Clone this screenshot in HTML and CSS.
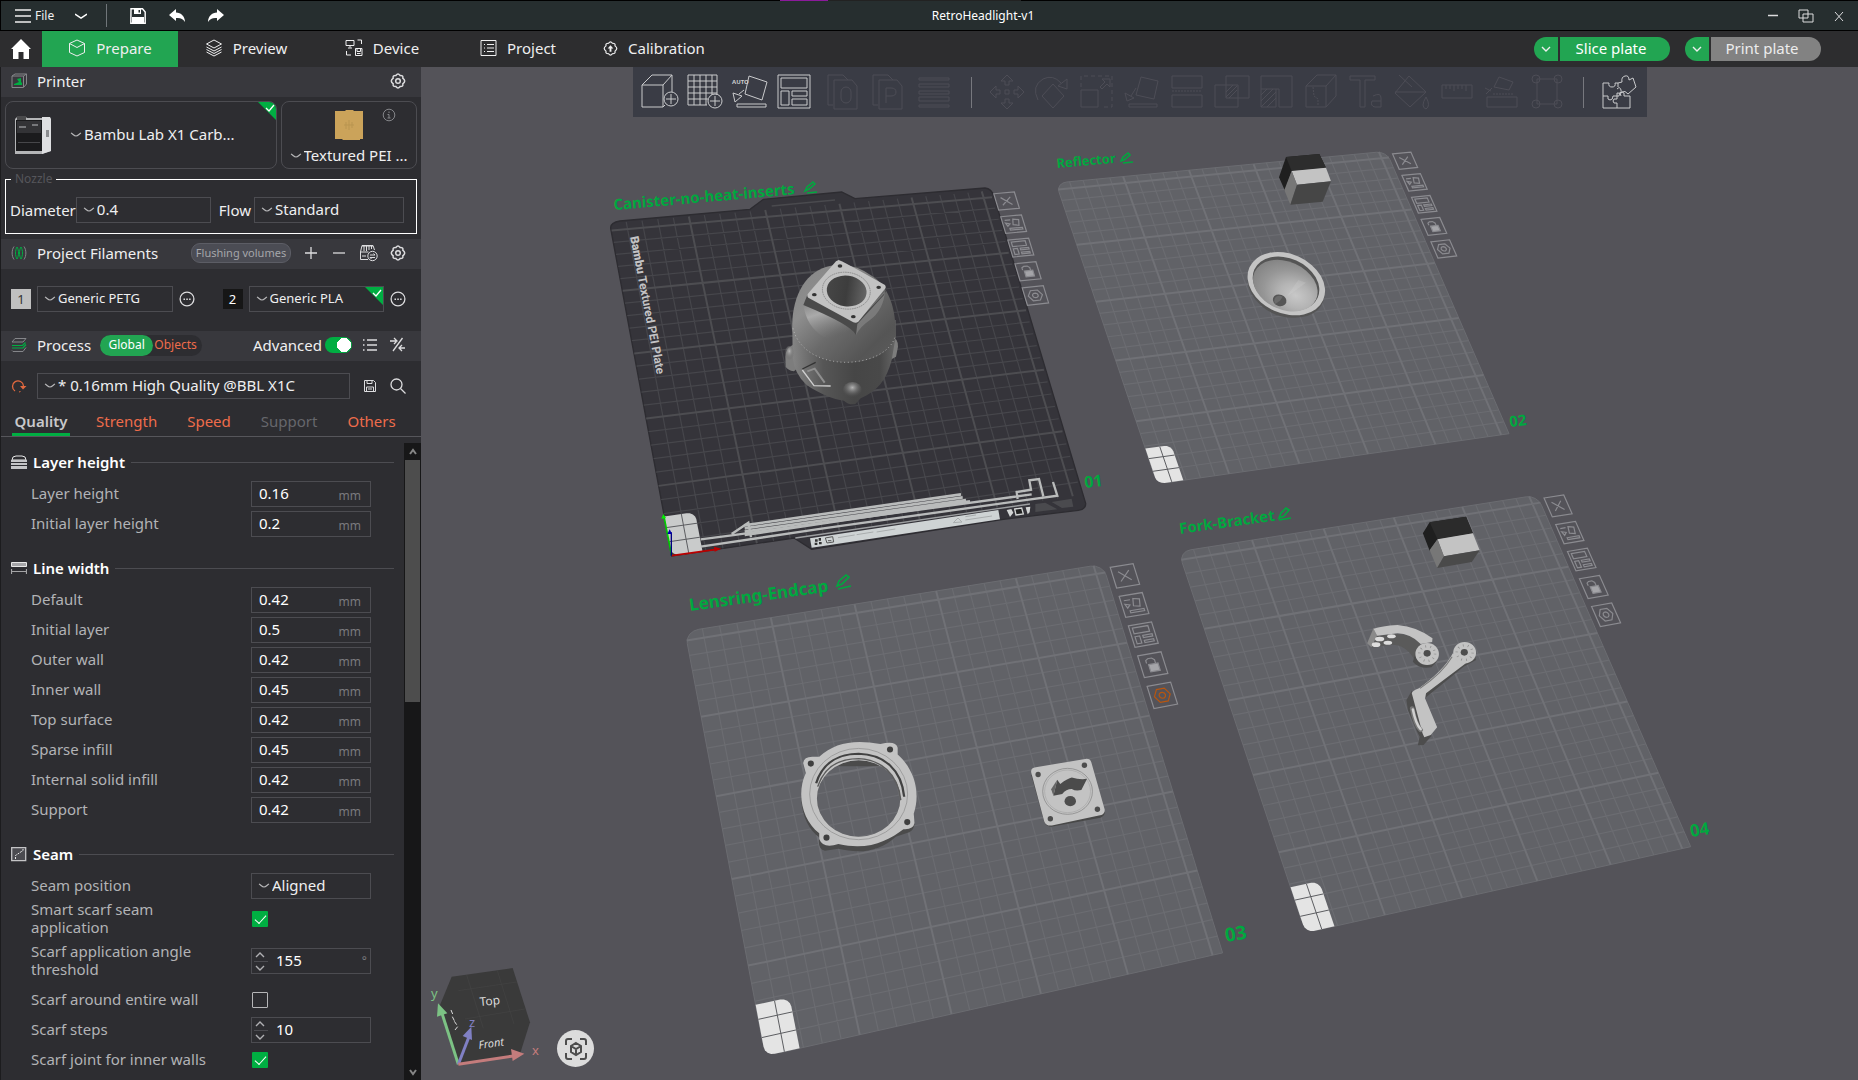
FILE: index.html
```html
<!DOCTYPE html>
<html lang="en">
<head>
<meta charset="utf-8">
<title>RetroHeadlight-v1</title>
<link rel="stylesheet" href="styles.css">
</head>
<body>
<svg class="sprite" aria-hidden="true">
  <symbol id="chev" viewBox="0 0 12 12"><path d="M1 4c2 1 3 3 5 3s3-2 5-3" fill="none" stroke="currentColor" stroke-width="1.2"/></symbol>
  <symbol id="down" viewBox="0 0 12 12"><path d="M2 4l4 4 4-4" fill="none" stroke="currentColor" stroke-width="1.4"/></symbol>
  <symbol id="up" viewBox="0 0 12 12"><path d="M2 8l4-4 4 4" fill="none" stroke="currentColor" stroke-width="1.4"/></symbol>
  <symbol id="gear" viewBox="0 0 16 16"><g fill="none" stroke="currentColor" stroke-width="1.5"><path d="M6 2.4Q8-.6 10 2.4Q13.600 2.200 12.800 5.200Q16.600 8 12.800 10.800Q13.600 13.800 10 13.600Q8 16.600 6 13.600Q2.400 13.800 3.200 10.800Q-.6 8 3.200 5.200Q2.400 2.200 6 2.400Z"/><circle cx="8" cy="8" r="2.300"/></g></symbol>
  <symbol id="dots" viewBox="0 0 16 16"><circle cx="8" cy="8" r="6.900" fill="none" stroke="currentColor" stroke-width="1.300"/><path d="M4.500 7.500h1.500v1.500h-1.500zM7.300 7.500h1.500v1.500h-1.500zM10.100 7.500h1.500v1.500h-1.500z" fill="currentColor"/></symbol>
  <symbol id="tick" viewBox="0 0 18 18"><path d="M0 0h18v18z" fill="#00ae42"/><path d="M8 6l3 3 5-6" fill="none" stroke="#fff" stroke-width="1.300"/></symbol>
</svg>

<header class="titlebar">
  <div class="title-left">
    <button class="file-menu" type="button">
      <svg width="16" height="14" viewBox="0 0 16 14"><path d="M0 1h16M0 7h16M0 13h16" stroke="currentColor" stroke-width="1.500"/></svg>
      File
    </button>
    <button class="bare" type="button" aria-label="More"><svg width="12" height="12" viewBox="0 0 12 12"><path d="M0 4l6 4 6-4" fill="none" stroke="currentColor" stroke-width="1.500"/></svg></button>
    <span class="title-rule"></span>
    <button class="bare" type="button" aria-label="Save"><svg width="16" height="16" viewBox="0 0 16 16"><path d="M1 .8h11.500L15.200 4v11.200H.8z" fill="none" stroke="currentColor" stroke-width="1.400"/><path d="M4 1h7v5H4zM2 9h12v6H2z" fill="currentColor"/><path d="M8.500 2h1.500v2.500H8.500z" fill="#262e2f"/></svg></button>
    <button class="bare" type="button" aria-label="Undo"><svg width="16" height="14" viewBox="0 0 16 14"><path d="M7 0v3.500c5 0 9 4 9 9.500-2-3.500-5-4.500-9-4v3L0 6z" fill="currentColor"/></svg></button>
    <button class="bare" type="button" aria-label="Redo"><svg width="16" height="14" viewBox="0 0 16 14"><path d="M9 0v3.500C4 3.500 0 7.500 0 13c2-3.500 5-4.500 9-4v3l7-6z" fill="currentColor"/></svg></button>
  </div>
  <h1 class="title">RetroHeadlight-v1</h1>
  <div class="title-right">
    <button class="bare" type="button" aria-label="Minimize"><svg width="10" height="12" viewBox="0 0 10 12"><path d="M0 5.500h10" stroke="currentColor" stroke-width="1.500"/></svg></button>
    <button class="bare" type="button" aria-label="Restore"><svg width="16" height="14" viewBox="0 0 16 14"><path d="M1 1h9v8H1zM5 5h10v8H5z" fill="none" stroke="currentColor"/></svg></button>
    <button class="bare" type="button" aria-label="Close"><svg width="10" height="12" viewBox="0 0 10 12"><path d="M1 2l8 9M9 2l-8 9" stroke="currentColor"/></svg></button>
  </div>
</header>

<nav class="nav">
  <a class="home" href="#home" aria-label="Home"><svg width="20" height="20" viewBox="0 0 20 20"><path d="M10 0l10 10h-2v10h-5.500v-7h-5v7H2V10H0z" fill="#fff"/></svg></a>
  <a class="tab tab-on" href="#prepare"><svg width="18" height="18" viewBox="0 0 18 18" class="line"><path d="M9 1l7.500 3.500v9L9 17l-7.500-3.500v-9zM1.500 4.500L9 8.500l7.500-4"/></svg>Prepare</a>
  <a class="tab" href="#preview"><svg width="18" height="18" viewBox="0 0 18 18" class="line"><path d="M9 1l7.500 4L9 9 1.500 5zM1.500 8L9 12l7.500-4M1.500 10.500l7.500 4 7.500-4M1.500 13L9 17l7.500-4"/></svg>Preview</a>
  <a class="tab" href="#device"><svg width="18" height="18" viewBox="0 0 18 18" class="line"><path d="M1 1.500h8v5H1zM5 6.500v2M3 9h4M12.500 1h4v4M1.500 12v4h4.500M10.500 9.500h6.500v7h-6.500zM12 9.500v3h3.500v-3M12 14.500h3.500"/></svg>Device</a>
  <a class="tab" href="#project"><svg width="17" height="18" viewBox="0 0 17 18" class="line"><path d="M1 1.500h15v15H1zM4 5.500h1M7 5.500h7M4 9h1M7 9h7M4 12.500h1M7 12.500h7"/></svg>Project</a>
  <a class="tab" href="#calibration"><svg width="15" height="15" viewBox="0 0 16 16"><path d="M6 2.400Q8-.6 10 2.400Q13.600 2.200 12.800 5.200Q16.600 8 12.800 10.800Q13.600 13.800 10 13.600Q8 16.600 6 13.600Q2.400 13.800 3.200 10.800Q-.6 8 3.200 5.200Q2.400 2.200 6 2.400Z" fill="none" stroke="currentColor" stroke-width="1.300"/><path d="M8 4.500l3 3.500H9v3.500H7V8H5z" fill="currentColor"/></svg>Calibration</a>
  <div class="actions">
    <div class="split"><button class="split-caret" type="button" aria-label="Slice options"><svg width="12" height="12"><use href="#down"/></svg></button><button class="split-main" type="button">Slice plate</button></div>
    <div class="split"><button class="split-caret" type="button" aria-label="Print options"><svg width="12" height="12"><use href="#down"/></svg></button><button class="split-main split-off" type="button">Print plate</button></div>
  </div>
</nav>

<main class="work">
<aside class="side">
  <div class="bar">
    <svg width="16" height="16" viewBox="0 0 16 16"><path d="M1 3l3-2h11.500v10l-3 3.500H1zM1 3h11.500v11M12.500 3l3-2" fill="none" stroke="#85868a"/><path d="M6 6l4-1v4l1 1v2H3v-1l5-2z" fill="#00ae42"/></svg>
    <h2>Printer</h2>
    <button class="bare push" type="button" aria-label="Printer settings"><svg width="16" height="16"><use href="#gear"/></svg></button>
  </div>
  <div class="cards">
    <div class="card card-printer">
      <svg width="38" height="38" viewBox="0 0 38 38"><path d="M1 3l2-2h9l1 1h23l1 2v31l-9 3H1z" fill="#b4b5b7"/><path d="M28 1h8l1 2v32l-9 3z" fill="#dedfe1"/><path d="M3 0h9v5H3z" fill="#4a4a4c"/><path d="M2 4h26v31H2z" fill="#1b1b1d"/><path d="M3 5h24v12H3z" fill="#333336"/><path d="M5 10h7v2H5zM18 8h6v2h-6z" fill="#77787b"/><path d="M4 26h22v1H4z" fill="#47474a"/><path d="M32 14h3v7h-3z" fill="#8b8c8f"/></svg>
      <div class="pick"><svg width="12" height="12"><use href="#chev"/></svg><select aria-label="Printer"><option>Bambu Lab X1 Carb...</option></select></div>
      <svg class="corner" width="18" height="18"><use href="#tick"/></svg>
    </div>
    <div class="card card-plate">
      <svg class="sheet" width="28" height="30" viewBox="0 0 28 30"><path d="M0 1h10l1-1h7l1 1h9v28h-3v1H8l-1-1H0z" fill="#cba35a"/><path d="M11 12v7M14 10v10M17 12v6M9 15h10" stroke="#b99550"/></svg>
      <svg class="info" width="14" height="14" viewBox="0 0 14 14"><circle cx="7" cy="7" r="5.800" fill="none" stroke="#85868a"/><path d="M7 3.500v1.500M5.500 6.500H7v3.500M5.500 10h3" stroke="#85868a" fill="none"/></svg>
      <div class="pick"><svg width="12" height="12"><use href="#chev"/></svg><select aria-label="Plate type"><option>Textured PEI ...</option></select></div>
    </div>
  </div>
  <fieldset class="nozzle">
    <legend>Nozzle</legend>
    <label for="dia">Diameter</label>
    <div class="box pick dia"><svg width="12" height="12"><use href="#chev"/></svg><select id="dia"><option>0.4</option></select></div>
    <label for="flow" class="flow-label">Flow</label>
    <div class="box pick grow"><svg width="12" height="12"><use href="#chev"/></svg><select id="flow"><option>Standard</option></select></div>
  </fieldset>

  <div class="bar">
    <svg width="16" height="16" viewBox="0 0 16 16" fill="none"><path d="M3 1.500C.5 5 .5 11 3 14.500M13 1.500c2.500 3.500 2.500 9.500 0 13" stroke="#85868a"/><path d="M6 2C4 5 4 11 6 14M6 2c2 3 2 9 0 12M10 2c-2 3-2 9 0 12M10 2c2 3 2 9 0 12" stroke="#00ae42"/></svg>
    <h2>Project Filaments</h2>
    <button class="flush push" type="button">Flushing volumes</button>
    <button class="bare add" type="button" aria-label="Add filament"><svg width="12" height="12" viewBox="0 0 12 12"><path d="M6 0v12M0 6h12" stroke="currentColor" stroke-width="1.300"/></svg></button>
    <button class="bare less" type="button" aria-label="Remove filament"><svg width="12" height="12" viewBox="0 0 12 12"><path d="M0 6h12" stroke="currentColor" stroke-width="1.300"/></svg></button>
    <button class="bare sync" type="button" aria-label="Sync AMS"><svg width="19" height="18" viewBox="0 0 19 18" fill="none" stroke="currentColor"><path d="M9 15.500H1.500V8L3 1.500h11L15.500 6M1.500 8h8M3 2h11M5 2v5M7.500 2v5M10 2v4M12.500 2v3M3 12h4"/><circle cx="13.500" cy="12" r="4.700"/><path d="M11 11h5l-1.500-1.500M16 13.500h-5l1.500 1.500"/></svg></button>
    <button class="bare" type="button" aria-label="Filament settings"><svg width="16" height="16"><use href="#gear"/></svg></button>
  </div>
  <div class="filaments">
    <div class="filament"><span class="chip chip-gray">1</span><div class="box pick grow"><svg width="12" height="12"><use href="#chev"/></svg><select class="small" aria-label="Filament 1"><option>Generic PETG</option></select></div><button class="bare" type="button" aria-label="Edit filament 1"><svg width="16" height="16"><use href="#dots"/></svg></button></div>
    <div class="filament"><span class="chip chip-black">2</span><div class="box pick grow"><svg width="12" height="12"><use href="#chev"/></svg><select class="small" aria-label="Filament 2"><option>Generic PLA</option></select><svg class="corner" width="18" height="18"><use href="#tick"/></svg></div><button class="bare" type="button" aria-label="Edit filament 2"><svg width="16" height="16"><use href="#dots"/></svg></button></div>
  </div>

  <div class="bar">
    <svg width="16" height="16" viewBox="0 0 16 16" fill="none"><path d="M1 5l3-3.500h11L12 5zM1 13.500l1 1h10l3-4" stroke="#85868a"/><path d="M1 8.500h10.500l3-3M1 11h11l3-3.500" stroke="#00ae42" stroke-width="1.200"/></svg>
    <h2>Process</h2>
    <div class="scope"><button class="scope-on" type="button">Global</button><button class="scope-off" type="button">Objects</button></div>
    <label class="push adv" for="adv">Advanced</label>
    <input class="toggle" id="adv" type="checkbox" checked>
    <button class="bare list" type="button" aria-label="List"><svg width="14" height="12" viewBox="0 0 14 12"><path d="M0 1h1.500M4 1h10M0 6h1.500M4 6h10M0 11h1.500M4 11h10" stroke="currentColor" stroke-width="1.400"/></svg></button>
    <button class="bare" type="button" aria-label="Compare"><svg width="16" height="16" viewBox="0 0 16 16" fill="none" stroke="currentColor" stroke-width="1.300"><path d="M12.500 1L3 14M0 4h6M4 1l3 3-3 3M15 11H9M12 8l-3 3 3 3"/></svg></button>
  </div>
  <div class="preset">
    <button class="bare reset" type="button" aria-label="Reset"><svg width="16" height="16" viewBox="0 0 16 16" fill="none"><path d="M4 13A5.500 5.500 0 1 1 12.500 8" stroke="#e2693f" stroke-width="1.300"/><path d="M9 8h6.500l-3.500 3.500z" fill="#e2693f"/><path d="M8 14l1.500-.5" stroke="#e2693f"/></svg></button>
    <div class="box pick grow"><svg width="12" height="12"><use href="#chev"/></svg><select aria-label="Preset"><option>* 0.16mm High Quality @BBL X1C</option></select></div>
    <button class="bare" type="button" aria-label="Save preset"><svg width="16" height="16" viewBox="0 0 16 16" fill="none" stroke="currentColor"><path d="M2.500 2.500h9L13.500 4.500v9h-11zM5 2.500v3h5v-3M4.500 13.500V9h7v4.500M6 11h4"/></svg></button>
    <button class="bare" type="button" aria-label="Search"><svg width="16" height="16" viewBox="0 0 16 16" fill="none" stroke="currentColor" stroke-width="1.300"><circle cx="6.500" cy="6.500" r="5.500"/><path d="M10.500 10.500L15.500 15.500"/></svg></button>
  </div>
  <div class="subtabs">
    <a class="sub sub-on" href="#quality">Quality</a><a class="sub" href="#strength">Strength</a><a class="sub" href="#speed">Speed</a><a class="sub sub-off" href="#support">Support</a><a class="sub" href="#others">Others</a>
  </div>

  <div class="settings">
    <div class="fields">
      <section>
        <h3><svg width="16" height="16" viewBox="0 0 16 16"><path d="M1 6q0-4 4-4h6q4 0 4 4z" fill="none" stroke="#e8e8e8"/><path d="M0 6h16v2H0zM0 9h16v2H0zM0 12h16v3H0z" fill="#c4c4c6"/></svg>Layer height</h3>
        <div class="row"><label for="f1">Layer height</label><div class="box num"><input id="f1" value="0.16"><span>mm</span></div></div>
        <div class="row"><label for="f2">Initial layer height</label><div class="box num"><input id="f2" value="0.2"><span>mm</span></div></div>
      </section>
      <section>
        <h3><svg width="16" height="16" viewBox="0 0 16 16"><path d="M.5 2.500h15v4H.5z" fill="#a5a5a8" stroke="#e8e8e8"/><path d="M.5 9v5M15.500 9v5M1 11.500h14" stroke="#a4a4a6" stroke-width="1.200"/></svg>Line width</h3>
        <div class="row"><label for="w1">Default</label><div class="box num"><input id="w1" value="0.42"><span>mm</span></div></div>
        <div class="row"><label for="w2">Initial layer</label><div class="box num"><input id="w2" value="0.5"><span>mm</span></div></div>
        <div class="row"><label for="w3">Outer wall</label><div class="box num"><input id="w3" value="0.42"><span>mm</span></div></div>
        <div class="row"><label for="w4">Inner wall</label><div class="box num"><input id="w4" value="0.45"><span>mm</span></div></div>
        <div class="row"><label for="w5">Top surface</label><div class="box num"><input id="w5" value="0.42"><span>mm</span></div></div>
        <div class="row"><label for="w6">Sparse infill</label><div class="box num"><input id="w6" value="0.45"><span>mm</span></div></div>
        <div class="row"><label for="w7">Internal solid infill</label><div class="box num"><input id="w7" value="0.42"><span>mm</span></div></div>
        <div class="row"><label for="w8">Support</label><div class="box num"><input id="w8" value="0.42"><span>mm</span></div></div>
      </section>
      <section>
        <h3><svg width="16" height="16" viewBox="0 0 16 16"><path d="M.7 1.700h14v13h-14z" fill="#4b4b50" stroke="#c4c4c6" stroke-width="1.300"/><path d="M4.500 13V9.500L12 4.500V2" fill="none" stroke="#e8e8e8" stroke-dasharray="2 1"/></svg>Seam</h3>
        <div class="row"><label for="s1">Seam position</label><div class="box pick field"><svg width="12" height="12"><use href="#chev"/></svg><select id="s1"><option>Aligned</option></select></div></div>
        <div class="row row-two"><label for="s2">Smart scarf seam application</label><input class="check" id="s2" type="checkbox" checked></div>
        <div class="row row-tall"><label for="s3">Scarf application angle threshold</label><div class="box num spin"><div class="steps"><button type="button" aria-label="Increase angle"><svg width="12" height="12"><use href="#up"/></svg></button><button type="button" aria-label="Decrease angle"><svg width="12" height="12"><use href="#down"/></svg></button></div><input id="s3" value="155"><span class="deg">°</span></div></div>
        <div class="row"><label for="s4">Scarf around entire wall</label><input class="check" id="s4" type="checkbox"></div>
        <div class="row"><label for="s5">Scarf steps</label><div class="box num spin"><div class="steps"><button type="button" aria-label="Increase steps"><svg width="12" height="12"><use href="#up"/></svg></button><button type="button" aria-label="Decrease steps"><svg width="12" height="12"><use href="#down"/></svg></button></div><input id="s5" value="10"></div></div>
        <div class="row"><label for="s6">Scarf joint for inner walls</label><input class="check" id="s6" type="checkbox" checked></div>
      </section>
    </div>
    <div class="scroll"><svg width="12" height="17" viewBox="0 0 12 17"><path d="M3 11l3-4 3 4" fill="none" stroke="#858585" stroke-width="2"/></svg><span class="thumb"></span><svg width="12" height="17" viewBox="0 0 12 17"><path d="M3 7l3 4 3-4" fill="none" stroke="#858585" stroke-width="2"/></svg></div>
  </div>
</aside>

<section class="view" aria-label="Build plates">
  <svg class="scene" id="scene" viewBox="421 67 1437 1013" preserveAspectRatio="xMidYMid slice">
    <defs>
      <linearGradient id="dome" x1="0" y1="0" x2="1" y2="1"><stop offset="0" stop-color="#858585"/><stop offset=".3" stop-color="#8e8e8e"/><stop offset=".55" stop-color="#6a6a6a"/><stop offset=".8" stop-color="#555"/><stop offset="1" stop-color="#5c5c5c"/></linearGradient>
      <linearGradient id="wall" x1="0" y1="0" x2="1" y2="0"><stop offset="0" stop-color="#858585"/><stop offset=".3" stop-color="#565656"/><stop offset=".6" stop-color="#464646"/><stop offset=".85" stop-color="#494949"/><stop offset="1" stop-color="#666"/></linearGradient>
      <linearGradient id="bore" x1="0" y1="0" x2="1" y2="0"><stop offset="0" stop-color="#464646"/><stop offset=".5" stop-color="#3d3d3d"/><stop offset="1" stop-color="#666"/></linearGradient>
      <radialGradient id="bowl" cx=".7" cy=".6" r=".7"><stop offset="0" stop-color="#c8c8c8"/><stop offset=".35" stop-color="#b4b4b4"/><stop offset=".7" stop-color="#979797"/><stop offset="1" stop-color="#858585"/></radialGradient>
      <radialGradient id="knob" cx=".5" cy=".35" r=".6"><stop offset="0" stop-color="#b5b5b5"/><stop offset="1" stop-color="#5a5a5a" stop-opacity="0"/></radialGradient>
      <linearGradient id="facet" x1="0" y1="0" x2=".5" y2="1"><stop offset="0" stop-color="#888"/><stop offset=".35" stop-color="#aaa"/><stop offset="1" stop-color="#777" stop-opacity="0"/></linearGradient>
    </defs>
    <g id="sheet1" transform="translate(590 170) scale(.333333)">
      <path d="M62 175Q60 158 90 153L480 118 520 88 755 66 795 86 1185 54Q1205 55 1212 80L1487 1000Q1488 1018 1465 1021L1240 1048 665 1138 612 1104 245 1158Z" fill="#35343a" stroke="#2d2c31" stroke-width="4"/>
      <path d="M545 108l190-18" stroke="#4a4a4e" stroke-width="5"/>
    </g>
    <g id="plates"></g>
    <g transform="translate(590 170) scale(.333333)">
      <g fill="none" stroke="#b9bbbb" stroke-width="7">
        <path d="M462 1066L1113 973M464 1075L1118 982M464 1085L1128 990M464 1095L1140 994" stroke-width="8"/>
        <path d="M332 1108L425 1096 1325 973M425 1092l50-34 8 44M332 1130L700 1075 1402 977 1389 936M1283 987l-3-21 43-7-5-28 29-4 13 52"/>
      </g>
      <path d="M660 1105L1225 1020 1230 1048 665 1133Z" fill="#ced3d4"/>
      <path d="M616 1104l704-102" stroke="#9c9ea0" stroke-width="4"/>
      <path d="M675 1108h8v7h-8zM686 1104h7v8h-7zM674 1118h8v7h-8zM687 1116h8v7h-8z" fill="#333"/>
      <path d="M706 1104l22-4 3 16-20 3zM714 1112h10" fill="none" stroke="#555" stroke-width="3"/>
      <path d="M744 1103l50-8M800 1094l50-8M860 1086l56-9M1090 1058l14-14 12 12zM1126 1040l32-5M1126 1050l80-12" fill="none" stroke="#a9adae" stroke-width="3"/>
      <path d="M1250 1020l14-3 6 11-10 13zM1307 1012l14-2-2 17-6 6z" fill="#d2d4d4"/><path d="M1274 1017l21-3 5 18-22 3z" fill="#222" stroke="#d2d4d4" stroke-width="4"/>
      <path d="M1336 1002l30-4 36 20-66 8zM1385 996l60-10 5 24-34 4z" fill="#4a4a4e"/>
      <path d="M245 1157L222 1040" stroke="#0c0" stroke-width="5"/><path d="M214 1046l14-2-8-12z" fill="#0e0"/>
      <path d="M245 1157l135-19" stroke="#b00" stroke-width="5"/><path d="M372 1130l22 6-20 9z" fill="#b00"/>
      <path d="M244 1157v-70" stroke="#000080" stroke-width="4"/><path d="M232 1092l7-14 7 14z" fill="#00a"/>
      <!-- canister -->
      <path d="M607 525Q585 540 586 560L587 590Q592 600 612 604L660 560ZM905 500Q925 505 924 530L918 560 900 570Z" fill="#7d7d7d"/>
      <path d="M607 470L608 560Q612 610 650 645C690 672 730 688 762 692Q776 706 796 702L812 685C860 665 890 630 905 570L917 500V450Z" fill="url(#wall)"/>
      <path d="M607 480C603 390 640 310 710 290Q780 270 850 320C905 360 918 430 917 500C900 550 840 577 770 578C690 575 620 540 607 480Z" fill="url(#dome)"/>
      <path d="M640 405Q720 390 798 460Q750 520 700 500Q650 470 640 405Z" fill="url(#facet)"/>
      <path d="M798 495Q790 470 800 455L885 365Q880 420 840 450Q810 470 798 495Z" fill="#8b8b8b" opacity=".6"/>
      <path d="M640 405L652 375 798 458 888 365 890 352 882 375 802 462 798 495Q785 465 640 405Z" fill="#4a4a4a"/>
      <path d="M609 475C625 540 690 577 770 577C850 575 905 540 915 500" fill="none" stroke="#cfcfcf" stroke-width="2" stroke-dasharray="3 8"/>
      <path d="M746 270Q752 270 885 345Q890 352 884 358L805 455Q798 460 790 457L655 383Q649 378 655 370L738 274Z" fill="#c2c2c2"/>
      <ellipse cx="769" cy="362" rx="72" ry="55" fill="none" stroke="#777" stroke-width="2" stroke-dasharray="5 2" transform="rotate(8 769 362)"/>
      <ellipse cx="770" cy="363" rx="60" ry="46" fill="url(#bore)" transform="rotate(8 770 363)"/>
      <g fill="#333"><ellipse cx="750" cy="288" rx="7" ry="5"/><ellipse cx="866" cy="352" rx="7" ry="5"/><ellipse cx="673" cy="374" rx="7" ry="5"/><ellipse cx="790" cy="440" rx="7" ry="5"/></g>
      <ellipse cx="787" cy="660" rx="28" ry="24" fill="url(#knob)"/><ellipse cx="598" cy="550" rx="14" ry="22" fill="url(#knob)"/>
      <path d="M637 600l35 47 50 1" fill="none" stroke="#cfcfcf" stroke-width="4"/><path d="M637 597l40-20" stroke="#333" stroke-width="4"/><path d="M652 604l22-8 30 42" fill="none" stroke="#8f8f8f" stroke-width="6"/>
    </g>
    <g transform="translate(1040 130) scale(.333333)">
      <path d="M738 81L838 72 858 113 755 123 735 182 717 142Z" fill="#1f1f1f"/><path d="M738 81L838 72 858 113 755 123Z" fill="#2d2d2d"/>
      <path d="M755 123L858 113 873 154 771 164Z" fill="#c3c3c3"/><path d="M755 123L771 164 751 224 733 180Z" fill="#777"/><path d="M771 164L873 154 848 215 751 224Z" fill="#464646"/>
      <path d="M623 450Q625 500 680 540Q720 565 765 563Q855 560 855 480Z" fill="#555"/>
      <ellipse cx="739" cy="461" rx="121" ry="89" fill="#c4c4c4" transform="rotate(24 739 461)"/>
      <ellipse cx="738" cy="461" rx="104" ry="76" fill="#555" transform="rotate(24 738 461)"/>
      <ellipse cx="736" cy="467" rx="101" ry="72" fill="url(#bowl)" transform="rotate(24 736 467)"/>
      <path d="M740 500L775 450 798 458Z" fill="#dedede" opacity=".2"/>
      <ellipse cx="719" cy="511" rx="21" ry="17" fill="#565656" transform="rotate(20 719 511)"/><path d="M706 522q-8-12 2-22 10-6 20 0l-8 12z" fill="#6a6a6a"/>
    </g>
    <g transform="translate(670 550) scale(.38265 .33801)">
      <path fill-rule="evenodd" d="M343 735C345 790 365 830 390 850Q385 885 405 890L440 884C500 900 550 890 590 848L625 835Q642 825 638 800L600 640 400 640Z M384 735A109 113 0 1 0 602 735A109 113 0 1 0 384 735" fill="#4b4b4b"/>
      <path fill-rule="evenodd" d="M348 630Q350 612 372 612L390 612C430 570 480 560 550 574Q590 562 595 585L595 605C640 650 655 720 637 780L639 808Q636 828 610 826C570 860 520 890 440 870Q400 885 390 855L390 838C345 800 330 720 355 660Z M384 735A109 113 0 1 0 602 735A109 113 0 1 0 384 735" fill="#c3c3c3"/>
      <g fill="none"><ellipse cx="493" cy="722" rx="128" ry="135" stroke="#8f8f8f" stroke-width="2"/><path d="M382 690C400 625 445 603 493 603C560 605 605 650 612 730" stroke="#414141" stroke-width="6"/><path d="M386 700C405 635 450 617 493 617C550 620 595 660 603 740" stroke="#5c5c5c" stroke-width="4"/></g>
      <g fill="#3f3f3f"><ellipse cx="368" cy="632" rx="8" ry="9"/><ellipse cx="575" cy="590" rx="8" ry="9"/><ellipse cx="409" cy="851" rx="8" ry="9"/><ellipse cx="620" cy="805" rx="8" ry="9"/></g>
      <path d="M944 665L978 805Q985 822 1000 818L1125 792Q1137 785 1136 775Z" fill="#484848"/>
      <path d="M944 658Q942 645 956 643L1085 618Q1098 616 1101 628L1136 768Q1137 782 1124 785L998 815Q982 817 978 803Z" fill="#c3c3c3"/>
      <ellipse cx="1039" cy="714" rx="65" ry="68" fill="none" stroke="#858585" stroke-width="2"/><ellipse cx="1039" cy="714" rx="60" ry="63" fill="none" stroke="#a0a0a0" stroke-width="1.500"/>
      <path d="M1012 680L1020 692Q1040 675 1050 673Q1070 680 1090 677L1075 710Q1060 714 1050 707Q1035 707 1025 722L1002 727Z" fill="#4b4b4b"/><path d="M1012 680L1002 727 996 708Z" fill="#666"/>
      <g fill="#4d4d4d"><ellipse cx="1046" cy="743" rx="15" ry="15"/><ellipse cx="962" cy="664" rx="7" ry="8"/><ellipse cx="1083" cy="637" rx="7" ry="8"/><ellipse cx="994" cy="795" rx="7" ry="8"/><ellipse cx="1117" cy="767" rx="7" ry="8"/></g>
    </g>
    <g transform="translate(1160 480) scale(.357143 .333333)">
      <path d="M755 127L857 110 876 160 777 178 755 212 736 160Z" fill="#1f1f1f"/><path d="M755 127L857 110 876 160 777 178Z" fill="#2b2b2b"/>
      <path d="M777 178L876 160 895 211 795 229Z" fill="#c3c3c3"/><path d="M777 178L795 229 776 264 755 210Z" fill="#777"/><path d="M795 229L895 211 873 246 776 264Z" fill="#4a4a4a"/>
      <path d="M598 444L608 467 592 502 580 490Z" fill="#8a8a8a"/><path d="M608 467L592 503 640 495Q690 490 715 545L730 490Q700 450 608 467Z" fill="#5a5a5a"/>
      <path d="M598 446Q620 438 665 435Q720 440 763 475L762 486 730 492Q700 460 665 460L608 467Z" fill="#c3c3c3"/>
      <g fill="#ddd"><ellipse cx="615" cy="477" rx="13" ry="7"/><ellipse cx="648" cy="469" rx="12" ry="6"/><ellipse cx="605" cy="494" rx="12" ry="7"/><ellipse cx="638" cy="488" rx="12" ry="6"/></g>
      <path d="M715 520L708 545Q725 568 760 562L775 545Z" fill="#4d4d4d"/><ellipse cx="748" cy="522" rx="33" ry="33" fill="#c3c3c3"/><ellipse cx="748" cy="521" rx="22" ry="22" fill="none" stroke="#8c8c8c" stroke-width="7" stroke-dasharray="2 12"/><ellipse cx="748" cy="520" rx="10" ry="10" fill="#4d4d4d"/>
      <path d="M745 652L850 560 885 540 880 520 740 630Z" fill="#4d4d4d"/>
      <path d="M705 632L690 660 694 690 720 755 727 770 722 796 738 795 760 768 735 700Z" fill="#4d4d4d"/>
      <path d="M705 640Q706 632 725 625C770 590 800 560 820 520L862 545 745 640 742 655 776 742 758 765 740 772 735 760Z" fill="#c3c3c3"/>
      <ellipse cx="853" cy="518" rx="32" ry="32" fill="#c3c3c3"/><ellipse cx="853" cy="518" rx="22" ry="22" fill="none" stroke="#8c8c8c" stroke-width="7" stroke-dasharray="2 12"/><ellipse cx="852" cy="517" rx="10" ry="10" fill="#4d4d4d"/>
      <path d="M728 625Q790 580 818 530" fill="none" stroke="#777" stroke-width="3"/><path d="M706 685Q715 735 730 750" fill="none" stroke="#777" stroke-width="13" stroke-linecap="round"/><path d="M708 688Q716 732 730 748" fill="none" stroke="#d0d0d0" stroke-width="7" stroke-linecap="round"/>
    </g>
    <g class="plate-name">
      <text transform="translate(614 210) rotate(-5)" font-size="15">Canister-no-heat-inserts</text>
      <text transform="translate(1057 168) rotate(-5)" font-size="13">Reflector</text>
      <text transform="translate(690 611) rotate(-8)" font-size="17">Lensring-Endcap</text>
      <text transform="translate(1180 534) rotate(-8)" font-size="15">Fork-Bracket</text>
      <text transform="translate(1085 488) rotate(-7)" font-size="16">01</text>
      <text transform="translate(1510 427) rotate(-7)" font-size="15">02</text>
      <text transform="translate(1226 942) rotate(-9)" font-size="19">03</text>
      <text transform="translate(1691 837) rotate(-9)" font-size="17">04</text>
    </g>
    <g fill="none" stroke="#00a83f" stroke-width="1.600">
      <path d="M805 191l2-4 6-5 2 2-6 5zM807 193l10-1"/><path d="M1121 161l2-4 5-4 2 2-6 5zM1123 163l10-1"/>
      <path d="M837 586l2-5 7-6 3 2-7 7zM838 589l13-3"/><path d="M1279 518l2-5 5-5 3 2-5 6zM1279 520l12-2"/>
    </g>
    <g class="engrave"><text transform="translate(630 237) rotate(79)"><tspan font-weight="900">Bambu</tspan> Textured PEI Plate</text></g>
    <g transform="translate(420 950) scale(.333333)">
      <path d="M95 80L278 54 330 217 300 312 115 345 60 165Z" fill="#3a3a3a"/>
      <path d="M140 75l50 160M232 62l50 160M115 122l175-26M135 207l180-30" stroke="#444" stroke-width="2"/>
      <path d="M115 343L66 190" stroke="#7cc284" stroke-width="9"/><path d="M54 160l28 30-31 10z" fill="#7cc284"/>
      <path d="M115 343L147 260" stroke="#8080c4" stroke-width="9"/><path d="M154 230l2 40-28-12z" fill="#8080c4"/>
      <path d="M115 343L280 318" stroke="#c47c7c" stroke-width="9"/><path d="M313 311l-40-14 5 36z" fill="#c47c7c"/>
      <path d="M93 180l5 12M97 200l6 12M103 214l7 10M105 240l8-10" stroke="#ddd" stroke-width="3"/>
    </g>
    <g class="gizmo">
      <text transform="translate(480 1006) rotate(-5)" font-size="12">Top</text>
      <text transform="translate(479 1049) rotate(-8)" font-size="11" font-style="italic">Front</text>
      <text x="431" y="998" font-size="13" fill="#7cc284">y</text><text x="469" y="1027" font-size="13" fill="#8080c4">z</text><text x="532" y="1055" font-size="13" fill="#c47c7c">x</text>
    </g>
  </svg>

  <div class="tools">
    <button class="tool" type="button" aria-label="Add"><svg viewBox="0 0 36 36"><path d="M0 11h21v22H0zM0 11L10 1h20L21 11M30 1v17M21 33l2-2"/><circle cx="29" cy="25" r="7"/><path d="M29 20v10M24 25h10"/></svg></button>
    <button class="tool" type="button" aria-label="Add plate"><svg viewBox="0 0 36 36"><path d="M1 1h29v20M20 31H1V1M7 1v30M13 1v30M19 1v30M25 1v20M1 7h29M1 13h29M1 19h29M1 25h20"/><circle cx="28" cy="27" r="7"/><path d="M28 22v10M23 27h10"/></svg></button>
    <button class="tool" type="button" aria-label="Auto orient"><svg viewBox="0 0 36 36"><path d="M17 2l18 6-5 18-17-6zM5 30h29v3H5zM12 16l-5 4M1 19l9 3-7 6z"/><text x="0" y="10">AUTO</text></svg></button>
    <button class="tool" type="button" aria-label="Arrange"><svg viewBox="0 0 36 36"><path d="M1 1h32v33H1zM4 4h26v10H4zM4 17h8v14H4zM15 17h15v5H15zM15 25h15v6H15z"/></svg></button>
    <button class="tool off first" type="button" aria-label="Split to objects"><svg viewBox="0 0 36 36"><path d="M6 31H1V1h15l5 5M7 6h18l5 6v23H7z"/><rect x="14" y="13" width="10" height="16" rx="5"/></svg></button>
    <button class="tool off" type="button" aria-label="Split to parts"><svg viewBox="0 0 36 36"><path d="M6 31H1V1h15l5 5M7 6h18l5 6v23H7zM14 29V14h5q5 0 5 4t-5 4h-5"/></svg></button>
    <button class="tool off" type="button" aria-label="Variable layer height"><svg viewBox="0 0 36 36"><path d="M2 4h30v2H2zM2 10h30v3H2zM2 17h30v3H2zM2 23h30v4H2zM2 31h30v2H2z"/></svg></button>
    <span class="tool-rule"></span>
    <button class="tool off" type="button" aria-label="Move"><svg viewBox="0 0 36 36"><path d="M16 11V7h-4l6-6 6 6h-4v4zM16 25v4h-4l6 6 6-6h-4v-4zM11 16H7v-4l-6 6 6 6v-4h4zM25 16h4v-4l6 6-6 6v-4h-4zM16 16h4v4h-4z"/></svg></button>
    <button class="tool off" type="button" aria-label="Rotate"><svg viewBox="0 0 36 36"><path d="M19 10l11 12-11 12L8 22zM4 26Q-3 12 9 5q10-5 18 4M33 5v10l-9-3z"/></svg></button>
    <button class="tool off" type="button" aria-label="Scale"><svg viewBox="0 0 36 36"><path d="M2 16h17v17H2z"/><path d="M2 13V2h31v31H22" stroke-dasharray="4 3"/><path d="M21 13l5-5-3-3h8v8l-3-3-5 5z"/></svg></button>
    <button class="tool off" type="button" aria-label="Lay on face"><svg viewBox="0 0 36 36"><path d="M17 3l17 4-4 18-18-4zM5 30h28v3H5zM12 14l-5 8M1 19l9 5-7 3z"/></svg></button>
    <button class="tool off" type="button" aria-label="Cut"><svg viewBox="0 0 36 36"><path d="M3 2h30v12H3zM3 21h30v12H3z"/><path d="M3 17h30" stroke-dasharray="2 1"/></svg></button>
    <button class="tool off" type="button" aria-label="Boolean"><svg viewBox="0 0 36 36"><path d="M12 2h23v22H12zM1 11h23v22H1zM12 18l7-7M12 23l11-11M15 24l8-8"/></svg></button>
    <button class="tool off" type="button" aria-label="Supports"><svg viewBox="0 0 36 36"><path d="M2 2h31v31H20V15H2zM2 15v18h15V15M2 21l6-6M2 27l12-12M2 33l15-15M8 33l9-9"/></svg></button>
    <button class="tool off" type="button" aria-label="Seam"><svg viewBox="0 0 36 36"><path d="M2 12h20v21H2zM2 12L13 1h19L22 12M32 1v21L22 33"/><path d="M9 13l1 9 4 3v7" stroke-dasharray="2 1"/></svg></button>
    <button class="tool off" type="button" aria-label="Text"><svg viewBox="0 0 36 36"><path d="M1 2h25v4H16v27h-5V6H1zM24 22q8-4 8 2v9h-6q-5-1-3-6h9"/></svg></button>
    <button class="tool off" type="button" aria-label="Color painting"><svg viewBox="0 0 36 36"><path d="M15 2l17 16-16 15L1 19zM1 18h31M5 1l13 12M32 23q5 9 0 12-6-2 0-12z"/></svg></button>
    <button class="tool off" type="button" aria-label="Measure"><svg viewBox="0 0 36 36"><path d="M3 11h30v13H3zM7 11v4M11 11v4M15 11v6M19 11v4M23 11v4M27 11v6"/></svg></button>
    <button class="tool off" type="button" aria-label="Assemble"><svg viewBox="0 0 36 36"><path d="M3 23h30v10H3zM15 3l14 5-4 8-15-3zM8 14l-6 6M1 14l6 3"/><path d="M9 20h20" stroke-dasharray="2 1"/></svg></button>
    <button class="tool off" type="button" aria-label="Brim ears"><svg viewBox="0 0 36 36"><path d="M8 5h20v25H8z"/><circle cx="7" cy="5" r="4"/><circle cx="29" cy="5" r="4"/><circle cx="7" cy="30" r="4"/><circle cx="29" cy="30" r="4"/></svg></button>
    <span class="tool-rule"></span>
    <button class="tool" type="button" aria-label="Assembly view"><svg viewBox="0 0 36 36"><path d="M2 34V9h6q-1 4 3 4t3-4h3M2 34h27V22h-6q1-4-2-4t-3 4h-2v3q-4-1-4 2t4 2v5M2 22h5q-1 4 2 4t3-4h4v-3q5 1 4-3t-4-1M17 13V9l4-1q-1-5 3-6t4 4l4-2 3 9-8 7q-3-4-6-2t-1 4"/></svg></button>
  </div>
  <button class="fit" type="button" aria-label="Fit view"><svg width="22" height="22" viewBox="0 0 22 22"><path d="M1 7V3q0-2 2-2h4M15 1h4q2 0 2 2v4M21 15v4q0 2-2 2h-4M7 21H3q-2 0-2-2v-4M11 5l5 3v6l-5 3-5-3V8zM6 8l5 3 5-3M11 11v6"/></svg></button>
</section>
</main>
<script src="scene.js"></script>
</body>
</html>
```
FILE: styles.css
```css
* { box-sizing: border-box; }
body {
  margin: 0;
  height: 100vh;
  display: flex;
  flex-direction: column;
  overflow: hidden;
  background: #2d2d31;
  color: #efeff0;
  font: 15px/20px "Noto Sans", "Open Sans", sans-serif;
}
h1, h2, h3 { margin: 0; font-size: 15px; font-weight: 400; }
svg { display: block; flex: none; }
button, input, select { font: inherit; color: inherit; }
button { padding: 0; border: 0; background: none; }
a { color: inherit; text-decoration: none; }
.sprite { position: absolute; width: 0; height: 0; }
.line { fill: none; stroke: currentColor; stroke-width: 1; }
.bare { display: flex; align-items: center; justify-content: center; color: #dcdcde; }

/* title bar */
.titlebar {
  flex: none;
  height: 31px;
  padding-top: 1px;
  display: flex;
  align-items: center;
  background: linear-gradient(90deg, #000 779px, #8b1a9b 779px, #8b1a9b 827px, #222 827px, #222 1020px, #000 1020px) top / 100% 1px no-repeat #262e2f;
  border-bottom: 1px solid #000;
  border-left: 1px solid #000;
}
.title-left { display: flex; align-items: center; padding-left: 14px; }
.file-menu { display: flex; align-items: center; gap: 4px; font-size: 12px; margin-right: 21px; }
.title-left .bare { color: #fff; margin-right: 23px; }
.title-left .bare:nth-child(2) { margin-right: 19px; }
.title-left .bare:last-child { margin-right: 0; }
.title-rule { width: 1px; height: 23px; background: #70767a; margin-right: 23px; }
.title { flex: 1; text-align: center; font-size: 12px; color: #fff; }
.title-right { display: flex; align-items: center; gap: 20px; padding: 0 14px 0 26px; }

/* main navigation */
.nav { flex: none; height: 36px; display: flex; background: #2d2d2f; }
.home { width: 42px; display: flex; align-items: center; justify-content: center; }
.tab { width: 136px; display: flex; align-items: center; justify-content: center; gap: 10px; padding-bottom: 2px; }
.tab-on { background: #22a552; }
.actions { margin-left: auto; display: flex; align-items: center; gap: 15px; padding-right: 37px; }
.split { display: flex; gap: 2px; height: 24px; }
.split-caret { width: 24px; display: flex; align-items: center; justify-content: center; background: #22a552; border-radius: 12px 0 0 12px; }
.split-main { width: 110px; padding: 0 8px 2px 0; background: #22a552; border-radius: 0 12px 12px 0; color: #fff; }
.split-off { background: #828282; color: #ececec; }

.work { flex: 1; min-height: 0; display: flex; }

/* sidebar */
.side { width: 421px; flex: none; display: flex; flex-direction: column; border-left: 1px solid #1c1c1e; }
.bar { flex: none; height: 30px; display: flex; align-items: center; padding: 0 15px 2px 10px; background: #38383d; }
.bar h2 { margin-left: 10px; }
.push { margin-left: auto; }
.cards { flex: none; display: flex; gap: 4px; padding: 4px 4px 0; }
.card { position: relative; height: 68px; border: 1px solid #4c4c51; border-radius: 8px; overflow: hidden; }
.card-printer { flex: 1; display: flex; align-items: center; padding-left: 8px; gap: 18px; }
.card-plate { width: 136px; display: flex; flex-direction: column; align-items: center; padding-top: 8px; gap: 4px; }
.corner { position: absolute; top: 0; right: 0; }
.info { position: absolute; top: 6px; right: 20px; }
.pick { display: flex; align-items: center; gap: 2px; color: #b6b6b8; min-width: 0; }
.pick select { flex: 1; min-width: 0; appearance: none; border: 0; padding: 0 0 2px; background: none; color: #efeff0; height: 24px; }
.pick .small { font-size: 13px; }
.box { height: 26px; border: 1px solid #4c4c51; }
.box.pick { position: relative; padding-left: 6px; }
.grow { flex: 1; }
.nozzle { flex: none; height: 61px; margin: 4px 4px 5px; padding: 12px 12px 0 4px; border: 1px solid #fff; display: flex; align-items: center; }
.nozzle legend { padding: 0 4px; margin-left: 1px; font-size: 12px; line-height: 12px; color: #56565b; }
.dia { width: 135px; }
.flow-label { margin: 0 3px 0 8px; }
.flush { height: 20px; width: 100px; border: 1px solid #5c5d65; border-radius: 9px; background: #4b4c54; color: #a5a6aa; font-size: 11px; line-height: 16px; }
.add { margin-left: 14px; }
.less { margin-left: 16px; }
.sync { margin: 0 12px 0 14px; }
.filaments { flex: none; display: flex; gap: 28px; height: 62px; align-items: center; padding: 0 15px 2px 10px; }
.filament { flex: 1; display: flex; align-items: center; gap: 6px; }
.chip { width: 20px; height: 20px; font-size: 13px; text-align: center; }
.chip-gray { background: #c0c0c0; color: #333; }
.chip-black { background: #161616; color: #fff; }
.scope { display: flex; margin-left: 9px; height: 21px; border-radius: 11px; background: #2d2d31; }
.scope button { font-size: 12px; line-height: 20px; }
.scope-on { width: 53px; border-radius: 11px; background: #22a552; color: #fff; }
.scope-off { width: 49px; padding-right: 4px; color: #ee6c4b; }
.toggle { appearance: none; width: 27px; height: 16px; margin: 0 11px 0 3px; border-radius: 8px; background: radial-gradient(circle at 19px 8px, #fff 7px, #00ae42 7px); }
.list { margin-right: 13px; }
.preset { flex: none; display: flex; align-items: center; gap: 12px; padding: 12px 15px 0 10px; }
.preset .reset { margin-right: -2px; }
.subtabs { flex: none; height: 38px; display: flex; gap: 30px; padding: 11px 0 0 11px; border-bottom: 1px solid #56565b; }
.sub { color: #ee6c4b; padding-top: 1px; }
.sub-on { width: 58px; margin-right: -4px; text-align: center; color: #c8c8ca; font-weight: 600; border-bottom: 3px solid #00ae42; }
.sub-off { color: #66676c; }

/* settings list */
.settings { flex: 1; min-height: 0; display: flex; }
.fields { flex: 1; padding: 10px 10px 0; overflow: hidden; }
.fields section { margin-bottom: 14px; }
.fields h3 { height: 32px; display: flex; align-items: center; gap: 6px; padding-bottom: 2px; font-weight: 600; color: #fff; }
.fields h3::after { content: ""; flex: 1; height: 1px; background: #4c4c51; }
.row { height: 30px; display: flex; align-items: center; padding-left: 20px; }
.row label { width: 190px; margin-right: 30px; padding-bottom: 2px; color: #b2b3b6; line-height: 18px; }
.row-two { height: 36px; }
.row-tall { height: 48px; }
.num { width: 120px; display: flex; align-items: center; padding: 0 9px 0 7px; }
.num input { flex: 1; min-width: 0; border: 0; padding: 0 0 2px; background: none; color: #fff; outline: 0; }
.num span { color: #7a7a7e; font-size: 12px; padding-top: 3px; }
.num .deg { padding: 0; margin-right: -6px; }
.field { width: 120px; }
.spin { padding-left: 2px; }
.steps { width: 14px; margin-right: 8px; }
.steps button { display: block; height: 12px; width: 14px; color: #b0b0b3; }
.steps button + button { border-top: 1px solid #4c4c51; }
.check { appearance: none; width: 16px; height: 16px; margin: 0 0 0 1px; border: 1px solid #b6b6b8; border-radius: 1px; }
.check:checked { border: 0; background: #00ae42; display: grid; place-items: center; }
.check:checked::after { content: ""; width: 10px; height: 5px; border: solid #fff; border-width: 0 0 1px 1px; transform: rotate(-48deg); margin-bottom: 3px; }
.scroll { width: 17px; margin-top: 6px; background: #171718; display: flex; flex-direction: column; align-items: center; }
.thumb { width: 15px; height: 38%; background: #4d4d4d; margin-bottom: auto; }

/* 3D view */
.view { flex: 1; min-width: 0; position: relative; background: #545359; }
.scene { position: absolute; inset: 0; width: 100%; height: 100%; }
.plate-name { fill: #00a83f; font-family: "Noto Sans", sans-serif; font-weight: 700; }
.engrave { fill: #c3c3c5; font: 700 12px Roboto, sans-serif; }
.gizmo { fill: #dcdcdc; font-family: "Noto Sans", sans-serif; }
.tools { position: relative; width: max-content; margin: 0 auto; height: 50px; display: flex; align-items: center; padding: 0 5px; background: #3a3c45; }
.tool { width: 45px; height: 44px; display: flex; align-items: center; justify-content: center; color: #c9cacc; }
.tool svg { width: 36px; height: 36px; overflow: visible; fill: none; stroke: currentColor; stroke-width: 1; }
.tool text { font-size: 6px; font-weight: 700; fill: currentColor; stroke: none; }
.off { color: #4d4d56; }
.first { margin-left: 5px; }
.tool-rule { width: 1px; height: 31px; background: #77787e; margin: 0 13px; }
.fit { position: absolute; left: 136px; bottom: 13px; width: 37px; height: 37px; border-radius: 50%; background: #dcdcdc; display: flex; align-items: center; justify-content: center; }
.fit svg { fill: none; stroke: #4d4d4d; stroke-width: 2; }
```
FILE: scene.js
```js
// Draws the build plates: a 256 mm bed is projected onto four screen corners.
const BED = 256;
const plates = [
  { bl: [671.5, 556], br: [1081.7, 495], tr: [990, 190.7], tl: [610.3, 223.3], fine: "#46464b", bold: "#4d4d51", patch: "#c9cbcb", active: true, menu: 258 },
  { bl: [1157.3, 484], br: [1509, 433.7], tr: [1386.3, 151.3], tl: [1056, 183], fine: "#6b6c71", bold: "#707176", patch: "#e4e4e4", menu: 260 },
  { bl: [765.3, 1056], br: [1222.6, 952.9], tr: [1102.8, 564.2], tl: [685, 631.5], fine: "#6b6c71", bold: "#707176", patch: "#e4e4e4", menu: 260, warn: true },
  { bl: [1305.7, 932.7], br: [1690.7, 846.7], tr: [1537.1, 495.1], tl: [1178.6, 551.7], fine: "#6b6c71", bold: "#707176", patch: "#e4e4e4", menu: 260 }
];

function projector({ bl, br, tr, tl }) {
  const dx1 = br[0] - tr[0], dx2 = tl[0] - tr[0], sx = bl[0] - br[0] + tr[0] - tl[0];
  const dy1 = br[1] - tr[1], dy2 = tl[1] - tr[1], sy = bl[1] - br[1] + tr[1] - tl[1];
  const det = dx1 * dy2 - dx2 * dy1;
  const g = (sx * dy2 - dx2 * sy) / det, h = (dx1 * sy - sx * dy1) / det;
  const a = br[0] - bl[0] + g * br[0], b = tl[0] - bl[0] + h * tl[0];
  const d = br[1] - bl[1] + g * br[1], e = tl[1] - bl[1] + h * tl[1];
  return (x, y) => {
    const u = x / BED, v = y / BED, w = g * u + h * v + 1;
    return ((a * u + b * v + bl[0]) / w).toFixed(2) + " " + ((d * u + e * v + bl[1]) / w).toFixed(2);
  };
}

// Rounded rectangle in bed millimetres; radii run bl, br, tr, tl.
function roundRect(x0, y0, x1, y1, radii) {
  const corners = [[x0, y0, 1, 1, 180], [x1, y0, -1, 1, 270], [x1, y1, -1, -1, 0], [x0, y1, 1, -1, 90]];
  const out = [];
  corners.forEach(([x, y, sx, sy, start], i) => {
    const r = radii[i];
    for (let k = 0; k <= 4; k++) {
      const t = (start + k * 22.5) * Math.PI / 180;
      out.push([x + sx * r + r * Math.cos(t), y + sy * r + r * Math.sin(t)]);
    }
  });
  return out;
}

const ring = (cx, cy, r, n) => Array.from({ length: n }, (_, i) => [cx + r * Math.cos(i * 2 * Math.PI / n), cy + r * Math.sin(i * 2 * Math.PI / n)]);

function drawPlate(p) {
  const at = projector(p);
  const closed = pts => "M" + pts.map(q => at(q[0], q[1])).join("L") + "Z";
  const line = (x0, y0, x1, y1) => "M" + at(x0, y0) + "L" + at(x1, y1);
  let fine = "", bold = "";
  for (let m = 10; m < BED; m += 10) {
    const seg = line(m, 0, m, BED) + line(0, m, BED, m);
    if (m % 50) fine += seg; else bold += seg;
  }
  let svg = "";
  if (!p.active) svg += `<path d="${closed(roundRect(0, 0, BED, BED, [8, 0, 8, 8]))}" fill="#616267" stroke="#6b6c71"/>`;
  svg += `<path d="${fine}" stroke="${p.fine}" stroke-width="1.2"/><path d="${bold}" stroke="${p.bold}" stroke-width="2"/>`;
  svg += `<path d="${closed(roundRect(0, 0, 18, 28, [5, 0, 5, 0]))}" fill="${p.patch}"/>`;
  svg += `<path d="${line(10, 0, 10, 28) + line(0, 10, 18, 10) + line(0, 20, 18, 20)}" stroke="#5c5d61" stroke-width="1"/>`;

  // Column of plate actions beside the top right corner.
  const X = p.menu, S = 15, STEP = 21;
  let box = "", glyph = "";
  const top = i => 253 - i * STEP;
  for (let i = 0; i < 5; i++) box += closed([[X, top(i)], [X + S, top(i)], [X + S, top(i) - S], [X, top(i) - S]]);
  const rel = (i, pts) => pts.map(([x, y]) => [X + x, top(i) - y]);
  glyph += closed(rel(0, [[4, 4], [11, 11]])) + closed(rel(0, [[11, 4], [4, 11]]));
  glyph += closed(rel(1, [[8, 3], [12, 4], [11, 9], [7, 8]])) + closed(rel(1, [[4, 11], [13, 11], [13, 12.5], [4, 12.5]])) + closed(rel(1, [[2, 6], [5, 7], [3, 9]])) + closed(rel(1, [[2, 3.5], [6, 3.5]]));
  glyph += closed(rel(2, [[2, 2], [12, 2], [12, 6], [2, 6]])) + closed(rel(2, [[2, 8], [5, 8], [5, 13], [2, 13]])) + closed(rel(2, [[7, 8], [13, 8], [13, 9.5], [7, 9.5]])) + closed(rel(2, [[7, 11.5], [13, 11.5], [13, 13], [7, 13]]));
  const lock = rel(3, [[5, 7], [11, 7], [11, 12], [5, 12]]);
  glyph += "M" + rel(3, [[4, 6], [4, 4], [5.5, 3], [8, 3], [9.5, 4.5], [9.5, 7]]).map(q => at(q[0], q[1])).join("L");
  const nut = closed(ring(X + 7.5, top(4) - 7.5, 5, 6)) + closed(ring(X + 7.5, top(4) - 7.5, 2, 10));
  svg += `<g fill="none" stroke="#8b8b90" stroke-width="1.2"><path d="${box}"/><path d="${glyph}"/><path d="${closed(lock)}" fill="#a5a5a9"/><path d="${nut}"${p.warn ? ' stroke="#b8560f"' : ""}/></g>`;
  return svg;
}

document.getElementById("plates").innerHTML = plates.map(drawPlate).join("");
```
